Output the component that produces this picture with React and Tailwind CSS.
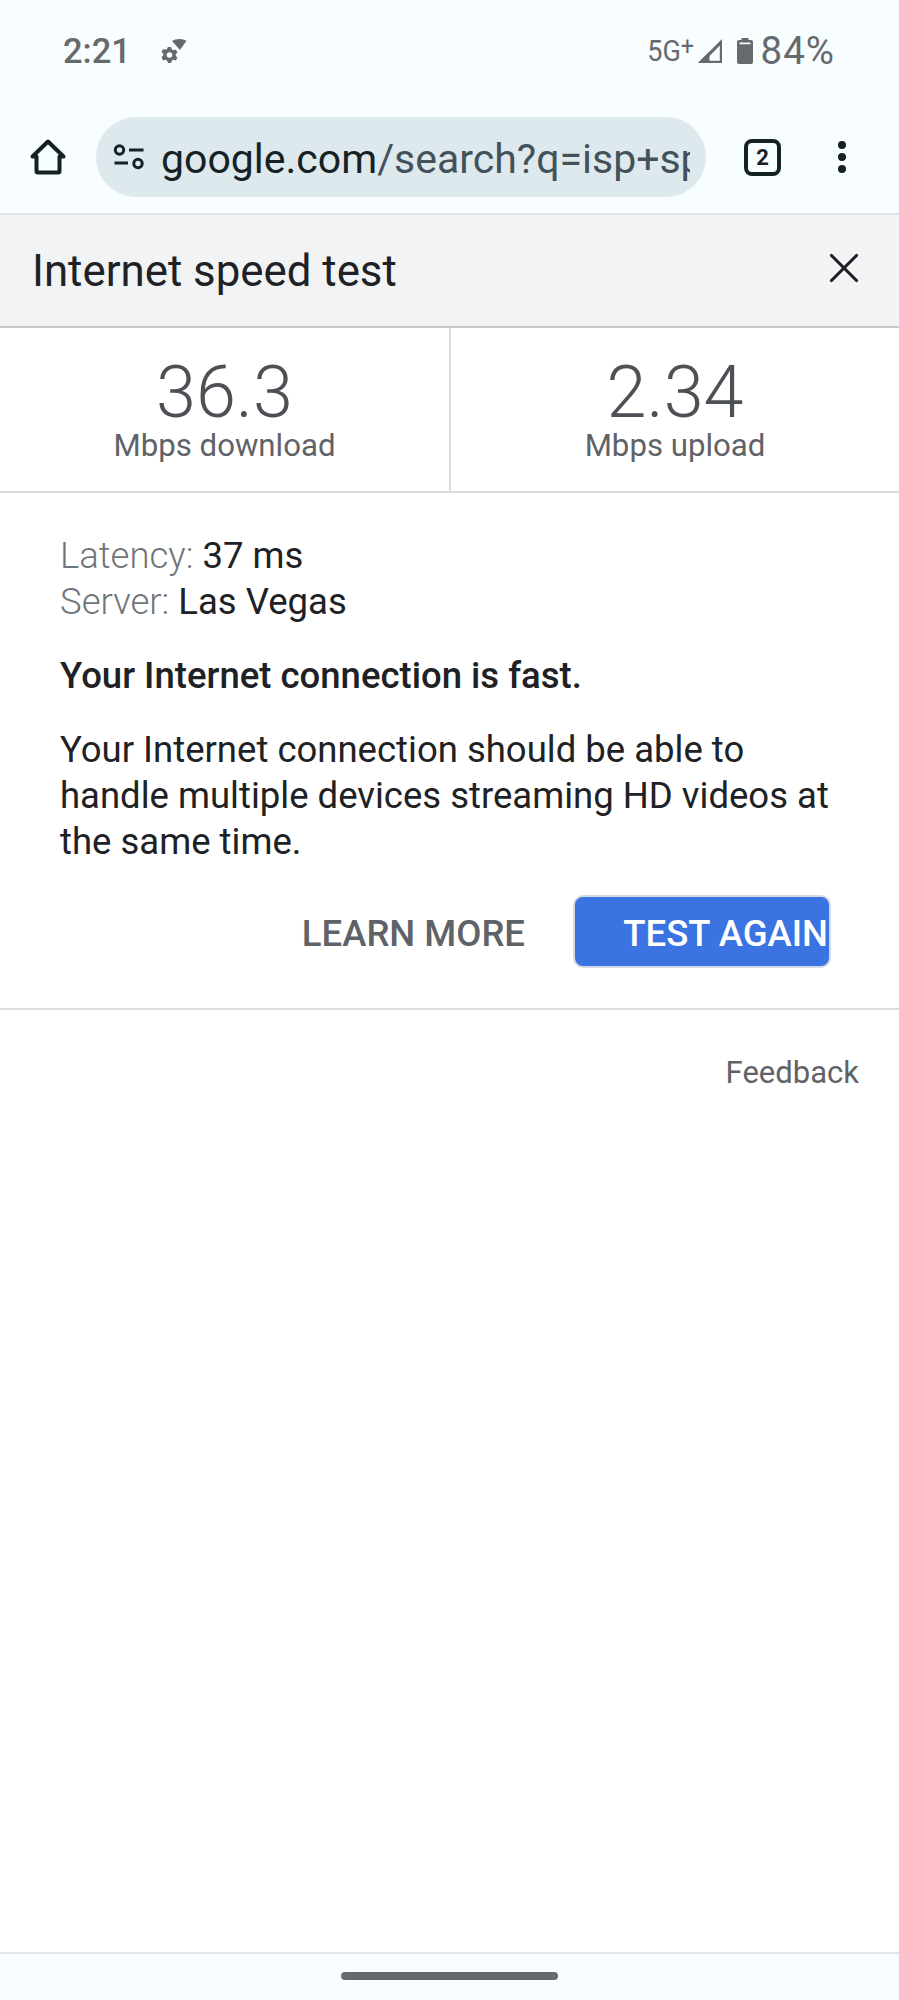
import { X } from "lucide-react";

function CogWifi() {
  return (
    <svg width="26" height="26" viewBox="0 0 26 26" className="text-[#666a6c]" fill="currentColor">
      <path d="M11 3 C14.500 .4 21 .2 25.500 2.800 L19 12 Z" />
      <path
        fillRule="evenodd"
        d="M6.800 9h3.400l.5 2.300 1.900 1 2.200-.8 1.700 2.900-1.700 1.500v2.200l1.700 1.500-1.700 2.900-2.200-.8-1.900 1-.5 2.300H6.800l-.5-2.300-1.900-1-2.200.8L.5 19.100l1.700-1.500v-2.200L.5 13.900l1.700-2.900 2.200.8 1.900-1zM8.500 14.200a2.800 2.800 0 1 0 0 5.600 2.800 2.800 0 0 0 0-5.600z"
      />
    </svg>
  );
}

function Signal() {
  return (
    <svg width="26" height="26" viewBox="0 0 26 26" className="text-[#666a6c]" fill="currentColor">
      <path fillRule="evenodd" d="M1 25 L25 1 V25 Z M8 22.800 H22.800 V7.500 Z" />
      <path d="M1 25 L12.500 13.500 V25 Z" />
    </svg>
  );
}

function Battery() {
  return (
    <svg width="16" height="26" viewBox="0 0 16 26" className="text-[#666a6c]" fill="currentColor">
      <path fillRule="evenodd" d="M4.500 0h7v2H14a2 2 0 0 1 2 2v20a2 2 0 0 1-2 2H2a2 2 0 0 1-2-2V4a2 2 0 0 1 2-2h2.500zM2.500 4.500v1.800h11V4.500z" />
    </svg>
  );
}

function Home() {
  return (
    <svg width="38" height="38" viewBox="0 0 38 38" fill="none" stroke="#162125" strokeWidth="4" strokeLinejoin="round">
      <path d="M3.500 18.500 L19 3.500 L34.500 18.500 H30.500 V33 a1.500 1.500 0 0 1-1.500 1.500 H9 a1.500 1.500 0 0 1-1.500-1.500 V18.500 Z" />
    </svg>
  );
}

function Tune() {
  return (
    <svg width="32" height="26" viewBox="0 0 32 26" fill="none" stroke="#162125" strokeWidth="3">
      <circle cx="6.500" cy="6" r="4.200" />
      <path d="M16 6 H30.500" />
      <path d="M1.500 19 H15" />
      <circle cx="25" cy="19.500" r="4.200" />
    </svg>
  );
}

function Dots() {
  return (
    <svg width="10" height="34" viewBox="0 0 10 34" fill="#162125">
      <circle cx="5" cy="5" r="4" />
      <circle cx="5" cy="17" r="4" />
      <circle cx="5" cy="29" r="4" />
    </svg>
  );
}

export default function App() {
  return (
    <div className="w-[899px] h-[2000px] flex flex-col bg-white font-['Roboto',sans-serif] overflow-hidden">
      {/* status bar + toolbar */}
      <div className="h-[215px] shrink-0 bg-[#f8fdff] border-b-2 border-[#dde6ea] flex flex-col">
        <div className="h-[117px] shrink-0 flex items-start justify-between pt-[29px] pl-[63px] pr-[64px]">
          <div className="flex items-center gap-[30px]">
            <span className="text-[34.500px] leading-[44px] font-medium text-[#666a6c]">2:21</span>
            <CogWifi />
          </div>
          <div className="flex items-center">
            <span className="text-[30px] leading-[44px] text-[#666a6c] scale-x-[0.9] origin-right mr-[2px]">
              5G<sup className="text-[26px] top-[-6px]">+</sup>
            </span>
            <Signal />
            <span className="w-[14px]" />
            <Battery />
            <span className="text-[38.500px] leading-[44px] text-[#666a6c] ml-[8px] tracking-[1px]">84%</span>
          </div>
        </div>
        <div className="flex items-center h-[80px] pl-[29px]">
          <Home />
          <div className="ml-[29px] w-[610px] h-[80px] rounded-[40px] bg-[#dde9ec] flex items-center pl-[17px] pr-[16px]">
            <Tune />
            <div className="ml-[16px] flex-1 overflow-hidden whitespace-nowrap text-[41px] leading-[50px] pt-[3px] text-[#43525a]">
              <span className="text-[#162125]">google.com</span>/search?q=isp+sp
            </div>
          </div>
          <div className="ml-[38px] w-[37px] h-[37px] rounded-[8px] border-[4px] border-[#162125] flex items-center justify-center text-[22px] font-bold text-[#162125]">
            2
          </div>
          <div className="ml-[56px]">
            <Dots />
          </div>
        </div>
      </div>

      {/* header */}
      <div className="h-[113px] shrink-0 bg-[#f1f3f4] border-b-2 border-[#c6c8ca] flex items-center justify-between pl-[32px] pr-[30px]">
        <span className="text-[43.800px] text-[#202124] pt-[3px]">Internet speed test</span>
        <X className="text-[#202124] mb-[6px]" size={50} strokeWidth={1.500} />
      </div>

      {/* results */}
      <div className="h-[165px] shrink-0 grid grid-cols-[451px_1fr] border-b-2 border-[#dadce0]">
        <div className="border-r-2 border-[#dadce0] flex flex-col items-center pt-[30px]">
          <span className="text-[72px] leading-[70px] font-light text-[#4d5156]">36.3</span>
          <span className="text-[31.200px] leading-[36px] text-[#5f6368]">Mbps download</span>
        </div>
        <div className="flex flex-col items-center pt-[30px]">
          <span className="text-[72px] leading-[70px] font-light text-[#4d5156]">2.34</span>
          <span className="text-[31.200px] leading-[36px] text-[#5f6368]">Mbps upload</span>
        </div>
      </div>

      {/* details */}
      <div className="h-[517px] shrink-0 border-b-2 border-[#dadce0] pl-[60px] pt-[40px] text-[36.500px] leading-[46px] text-[#202124]">
        <div>
          <span className="font-light text-[#70757a]">Latency:</span> 37 ms
        </div>
        <div>
          <span className="font-light text-[#70757a]">Server:</span> Las Vegas
        </div>
        <div className="mt-[28px] font-medium">Your Internet connection is fast.</div>
        <div className="mt-[28px] w-[790px]">
          Your Internet connection should be able to handle multiple devices streaming HD videos at the same time.
        </div>
        <div className="mt-[30px] w-[771px] flex items-center justify-end">
          <span className="font-medium text-[#5f6368] mr-[48px] pt-[5px]">LEARN MORE</span>
          <div className="w-[258px] h-[73px] rounded-[10px] bg-[#3b73e3] border-2 border-[#d5dbe6] flex items-center justify-end overflow-hidden text-white font-medium pt-[4px] pr-[1px]">
            TEST AGAIN
          </div>
        </div>
      </div>

      {/* feedback */}
      <div className="flex-1 flex justify-end pr-[40px] pt-[43px]">
        <span className="text-[31px] leading-[40px] text-[#5f6368]">Feedback</span>
      </div>

      {/* nav bar */}
      <div className="h-[48px] shrink-0 bg-[#f8fdff] border-t-2 border-[#dde6ea] flex justify-center pt-[18px]">
        <div className="w-[217px] h-[8px] rounded-full bg-[#666a6c]" />
      </div>
    </div>
  );
}
